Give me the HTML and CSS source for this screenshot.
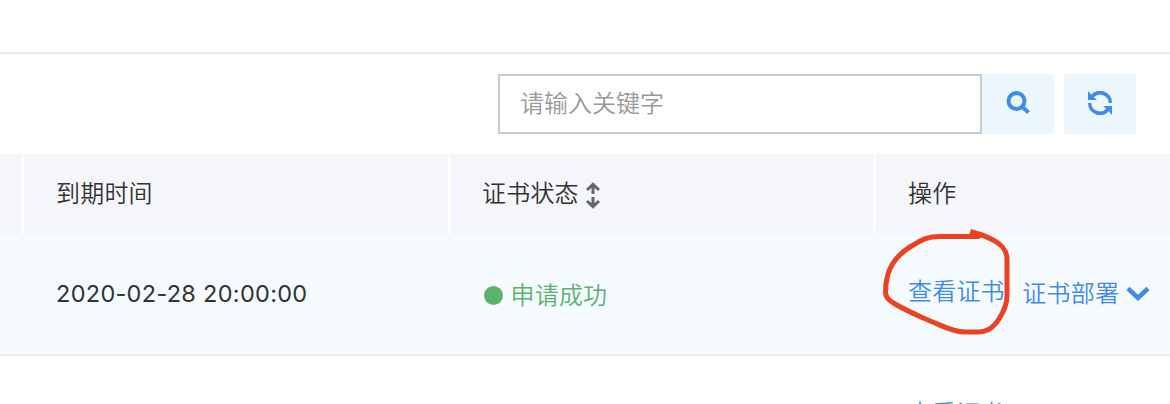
FILE: index.html
```html
<!doctype html>
<html lang="zh-CN">
  <head>
    <meta charset="UTF-8" />
    <title>证书管理</title>
    <link rel="stylesheet" href="styles.css">
  </head>
  <body>
    <div class="top-bar"></div>
    <!-- toolbar -->
    <div class="toolbar">
      <input class="search-input" type="text" placeholder="请输入关键字" />
      <button class="tool-button" aria-label="搜索">
        <svg width="24" height="24" viewBox="0 0 24 24" fill="none" stroke="#3f8cee" stroke-width="4">
          <circle cx="10.5" cy="10" r="8" />
          <path d="M16 15.5l6.5 6" />
        </svg>
      </button>
      <button class="tool-button tool-refresh" aria-label="刷新">
        <svg width="24" height="24" viewBox="0 0 24 24" fill="#3f8cee">
          <path d="M0 0v9h9L5.8 6.2A8.8 8.8 0 0 1 20.8 12H24A12 12 0 0 0 3.2 3.8Z" />
          <path d="M24 24v-9h-9l3.2 2.8A8.8 8.8 0 0 1 3.2 12H0a12 12 0 0 0 20.8 8.2Z" />
        </svg>
      </button>
    </div>
    <!-- table -->
    <div class="table">
      <div class="row row-head">
        <div class="cell"></div>
        <div class="cell">到期时间</div>
        <div class="cell">
          证书状态
          <svg class="sort" width="14" height="27" viewBox="0 0 14 27" fill="none" stroke="#666" stroke-width="3">
            <path d="M1 8l6-5.6 6 5.6M7 3v9M7 15v9M1 19l6 5.6 6-5.6" />
          </svg>
        </div>
        <div class="cell">操作</div>
      </div>
      <div class="row row-active">
        <div class="cell"></div>
        <div class="cell date">2020-02-28 20:00:00</div>
        <div class="cell status"><span class="dot"></span>申请成功</div>
        <div class="cell actions">
          <a class="link link-view">查看证书</a>
          <a class="link link-deploy">证书部署</a>
          <svg class="chevron" width="24" height="16" viewBox="0 0 24 16" fill="none" stroke="#3f8cee" stroke-width="4.5">
            <path d="M2 2.5l10 9.5 10-9.5" />
          </svg>
          <!-- hand-drawn mark -->
          <svg class="mark" width="130" height="110" viewBox="0 0 130 110" fill="none" stroke="#ee4023" stroke-width="5" stroke-linejoin="round">
            <path d="M98 8.5H58C47 8.5 41 12 34 16C19 24 11 33 7 46C5 53 4.5 58 4.5 64C4.5 70 9 73 14 76C26 83 38 88 49 93C62 98 72 104 84 104H97C106 104 113 99 118 91C123 83 126 76 126 68V31C126 22 119 15 110 11C103 7 97 6 91 4" />
            <path class="mark-tip" d="M90 1l14 6-6 4-10-3z" />
          </svg>
        </div>
      </div>
      <div class="row row-next">
        <div class="cell"></div>
        <div class="cell"></div>
        <div class="cell"></div>
        <div class="cell actions"><a class="link link-view">查看证书</a></div>
      </div>
    </div>
  </body>
</html>
```
FILE: styles.css
```css
* {
  box-sizing: border-box;
}

body {
  margin: 0;
  width: 1170px;
  height: 404px;
  overflow: hidden;
  background: #fff;
  color: #333;
  font-family: Inter, 'Noto Sans CJK SC DemiLight', 'Noto Sans CJK SC', sans-serif;
  font-size: 24px;
  font-weight: 350;
  line-height: 36px;
}

.top-bar {
  height: 54px;
  border-bottom: 2px solid #e8eaef;
}

/* toolbar */
.toolbar {
  display: flex;
  justify-content: flex-end;
  height: 100px;
  padding: 20px 34px;
}
.search-input {
  width: 484px;
  height: 60px;
  padding: 0 20px 2px;
  border: 2px solid #ccc;
  border-radius: 0;
  outline: none;
  background: #fff;
  font: inherit;
}
.search-input::placeholder {
  color: #999;
}
.tool-button {
  display: flex;
  align-items: center;
  justify-content: center;
  width: 72px;
  height: 60px;
  padding: 0 0 2px;
  border: 0;
  background: #ebf6fd;
}
.tool-refresh {
  margin-left: 10px;
}

/* table */
.row {
  display: grid;
  grid-template-columns: 24px 426px 426px 294px;
}
.cell {
  display: flex;
  align-items: center;
  padding-left: 32px;
  letter-spacing: 0.2px;
  white-space: nowrap;
}
.cell:first-child {
  padding: 0;
}
.row-head {
  height: 80px;
}
.row-head .cell {
  border-right: 2px solid #fff;
  background: #f5f6fa;
}
.row-head .cell:last-child {
  border-right: 0;
}
.sort {
  margin-left: 7.5px;
  margin-top: 2px;
}
.row-active {
  height: 122px;
  border-bottom: 2px solid #e8edf4;
  background: #f5fbff;
}
.date {
  font-size: 23.5px;
  font-weight: 400;
  letter-spacing: 0.3px;
}
.status {
  color: #5bb36b;
  padding-top: 4px;
}
.dot {
  width: 19px;
  height: 19px;
  margin: -2px 7.5px 0 2px;
  border-radius: 50%;
  background: #5bb36b;
}
.actions {
  position: relative;
}
.link {
  color: #3f8cee;
}
.link-view {
  padding-bottom: 4px;
}
.link-deploy {
  margin-left: 17.5px;
}
.chevron {
  margin-left: 6.5px;
}
.mark {
  position: absolute;
  left: 5px;
  top: -6px;
  overflow: visible;
}
.mark-tip {
  fill: #ee4023;
  stroke: none;
}
/* only the top of this row is in view */
.row-next {
  height: 48px;
  overflow: hidden;
}
.row-next .cell {
  align-items: flex-start;
  padding-top: 40px;
}
```
